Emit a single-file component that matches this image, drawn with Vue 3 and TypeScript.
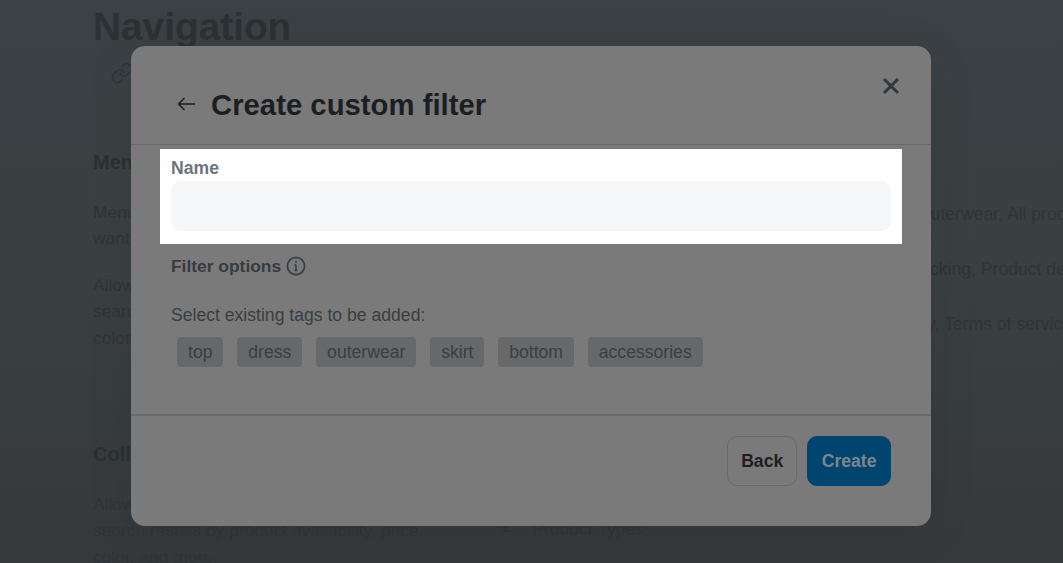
<script setup lang="ts">
const tags: string[] = ['top', 'dress', 'outerwear', 'skirt', 'bottom', 'accessories']
</script>

<template>
  <div class="page">
    <h1 class="page-title">Navigation</h1>
    <div class="page-link">
      <svg width="24" height="24" viewBox="0 0 24 24" fill="none" stroke="currentColor" stroke-width="1.6" stroke-linecap="round" stroke-linejoin="round">
        <path d="M10 13a5 5 0 0 0 7.5.5l3-3a5 5 0 0 0-7-7l-1.7 1.7" />
        <path d="M14 11a5 5 0 0 0-7.5-.5l-3 3a5 5 0 0 0 7 7l1.7-1.7" />
      </svg>
    </div>
    <section class="row first">
      <div class="col-left">
        <h2>Menus</h2>
        <p>Menu items help customers find what they want and navigate around your store.</p>
        <p>Allow customers to filter their collection search results by product availability, price, color, and more.</p>
      </div>
      <ul class="col-right">
        <li>Main menu: Home, Tops, Dresses, Skirts, Jeans, Outerwear, All products</li>
        <li>Footer menu: Contact us, Sizes, Returns, Order tracking, Product details</li>
        <li>Legal menu: About us, Blog, Returns, Privacy policy, Terms of service</li>
      </ul>
    </section>
    <section class="row second">
      <div class="col-left">
        <h2>Collection filters</h2>
        <p>Allow customers to filter their collection search results by product availability, price, color, and more.</p>
      </div>
      <ul class="col-right">
        <li class="drag-item"><span class="dots"></span>Product Types</li>
      </ul>
    </section>

    <div class="overlay">
      <div class="modal">
        <header class="modal-head">
          <svg class="back-icon" width="24" height="24" viewBox="0 0 24 24" fill="none" stroke="currentColor" stroke-width="1.5">
            <path d="M21 12H4.5M10.5 6l-6 6 6 6" />
          </svg>
          <h3>Create custom filter</h3>
          <svg class="close-icon" width="24" height="24" viewBox="0 0 24 24" fill="none" stroke="currentColor" stroke-width="3">
            <path d="M5 5l14 14M19 5L5 19" />
          </svg>
        </header>
        <div class="modal-body">
          <div class="field">
            <label>Name</label>
            <div class="input"></div>
          </div>
          <div class="options">
            <span>Filter options</span>
            <svg width="20" height="20" viewBox="0 0 20 20" fill="none" stroke="currentColor" stroke-width="1.7">
              <circle cx="10" cy="10" r="8.6" />
              <path d="M10 9v5.5M8.5 14.5h3M8.5 9H10" stroke-width="1.5" />
              <circle cx="10" cy="6" r="1" fill="currentColor" stroke="none" />
            </svg>
          </div>
          <p class="hint">Select existing tags to be added:</p>
          <div class="tags">
            <span v-for="tag in tags" :key="tag" class="tag">{{ tag }}</span>
          </div>
        </div>
        <footer class="modal-foot">
          <button class="btn back">Back</button>
          <button class="btn create">Create</button>
        </footer>
      </div>
    </div>
  </div>
</template>

<style>
html, body {
  margin: 0;
  height: 100%;
  overflow: hidden;
}
</style>

<style scoped>
.page {
  position: relative;
  box-sizing: border-box;
  width: 1063px;
  height: 563px;
  overflow: hidden;
  padding-left: 93px;
  background: linear-gradient(180deg, #3b4144 0%, #3a3f42 50%, #35393c 100%);
  color: #2f3538;
  font-family: "Liberation Sans", Arial, sans-serif;
  font-size: 17.6px;
  line-height: 26.4px;
}
.page-title {
  margin: 0;
  padding-top: 4px;
  font-size: 38.8px;
  line-height: 46px;
  font-weight: 700;
  color: #2c3134;
}
.page-link {
  display: flex;
  margin: 11px 0 0 17px;
  height: 24px;
  color: #2f3538;
}
.row {
  display: grid;
  grid-template-columns: 407px 1fr;
}
.first {
  margin-top: 64px;
}
.second {
  margin-top: 90px;
}
h2 {
  margin: 0;
  font-size: 20px;
  line-height: 26px;
  font-weight: 700;
  color: #2b3033;
}
.col-left {
  width: 345px;
}
.col-left p {
  margin: 20px 0 0;
  font-size: 17.4px;
}
.col-left h2 + p {
  margin-top: 24px;
}
.col-right {
  list-style: none;
  padding: 0 0 0 32px;
  white-space: nowrap;
}
.first .col-right {
  margin: 52px 0 0;
}
.col-right li + li {
  margin-top: 28.6px;
}
.drag-item {
  position: relative;
}
.dots {
  position: absolute;
  left: -32px;
  top: 10px;
  width: 10px;
  height: 7px;
  background-image: radial-gradient(circle, #2b3033 1px, transparent 1px);
  background-size: 3.3px 3.3px;
}
.second .col-right {
  margin: 75px 0 0;
}
.overlay {
  position: absolute;
  inset: 0;
  padding: 46px 0 0 131px;
}
.modal {
  display: flex;
  flex-direction: column;
  width: 800px;
  height: 480px;
  border-radius: 14px;
  background: #7a7a7a;
  box-shadow: 0 8px 50px rgba(0, 0, 0, 0.08);
}
.modal-head {
  position: relative;
  box-sizing: border-box;
  display: flex;
  align-items: center;
  height: 99px;
  padding: 18px 0 0 43px;
  border-bottom: 1px solid #686868;
  color: #1b1f23;
}
.back-icon {
  margin-right: 13px;
}
.modal-head h3 {
  margin: 2px 0 0;
  font-size: 29.3px;
  line-height: 36px;
  font-weight: 700;
}
.close-icon {
  position: absolute;
  top: 28px;
  right: 28px;
  color: #32383c;
}
.modal-body {
  padding: 4px 29px 0;
}
.field {
  padding: 8px 11px 13px;
  background: #ffffff;
}
.field label {
  display: block;
  font-size: 17.6px;
  line-height: 22px;
  font-weight: 700;
  color: #6c757d;
  margin-bottom: 2px;
}
.input {
  height: 50px;
  border-radius: 10px;
  background: #f5f6f8;
}
.options {
  display: flex;
  align-items: center;
  gap: 5px;
  margin: 11px 0 0 11px;
  font-weight: 700;
  font-size: 17.4px;
  line-height: 22px;
  color: #363c40;
}
.hint {
  margin: 26px 0 0 11px;
  font-size: 17.6px;
  line-height: 24px;
  color: #393e42;
}
.tags {
  display: flex;
  gap: 13.8px;
  margin: 10px 0 0 17px;
}
.tag {
  height: 30px;
  padding: 0 11px;
  border-radius: 4px;
  background: #66686a;
  color: #393e42;
  font-size: 17.6px;
  line-height: 30px;
}
.modal-foot {
  display: flex;
  justify-content: flex-end;
  gap: 10px;
  margin-top: auto;
  height: 112px;
  box-sizing: border-box;
  padding: 20px 40px 0;
  border-top: 2px solid #6a6a6a;
}
.btn {
  box-sizing: border-box;
  height: 50px;
  border-radius: 10px;
  font-family: inherit;
  font-size: 17.6px;
  font-weight: 700;
}
.back {
  padding: 0 13px;
  border: 1px solid #6a6a6a;
  background: transparent;
  color: #1b1f23;
}
.create {
  padding: 0 13.5px;
  border: 1px solid #004470;
  background: #004470;
  color: #7c868e;
}
</style>
